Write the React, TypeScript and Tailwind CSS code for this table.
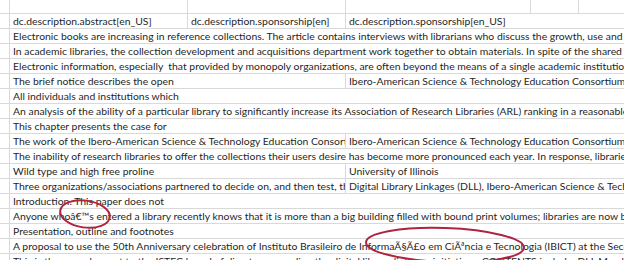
// px widths of columns A..F, used to size cells and merged overflow segments
const widths = [10, 178, 158, 185, 48, 160];

type Row = (string | null)[];

const rows: Row[] = [
  [null, null, null, null, null, null],
  [null, "dc.description.abstract[en_US]", "dc.description.sponsorship[en]", "dc.description.sponsorship[en_US]", null, null],
  [null, "Electronic books are increasing in reference collections. The article contains interviews with librarians who discuss the growth, use and future of e-books in their libraries.", null, null, null, null],
  [null, "In academic libraries, the collection development and acquisitions department work together to obtain materials. In spite of the shared goals of both departments", null, null, null, null],
  [null, "Electronic information, especially  that provided by monopoly organizations, are often beyond the means of a single academic institution to acquire", null, null, null, null],
  [null, "The brief notice describes the open", null, "Ibero-American Science & Technology Education Consortium", null, null],
  [null, "All individuals and institutions which", null, null, null, null],
  [null, "An analysis of the ability of a particular library to significantly increase its Association of Research Libraries (ARL) ranking in a reasonable amount of time", null, null, null, null],
  [null, "This chapter presents the case for", null, null, null, null],
  [null, "The work of the Ibero-American Science & Technology Education Consortium (ISTEC)", null, "Ibero-American Science & Technology Education Consortium", null, null],
  [null, "The inability of research libraries to offer the collections their users desire has become more pronounced each year. In response, libraries have", null, null, null, null],
  [null, "Wild type and high free proline", null, "University of Illinois", null, null],
  [null, "Three organizations/associations partnered to decide on, and then test, the", null, "Digital Library Linkages (DLL), Ibero-American Science & Technology Education Consortium", null, null],
  [null, "Introduction. This paper does not", null, null, null, null],
  [null, "Anyone whoâ€™s entered a library recently knows that it is more than a big building filled with bound print volumes; libraries are now becoming", null, null, null, null],
  [null, "Presentation, outline and footnotes", null, null, null, null],
  [null, "A proposal to use the 50th Anniversary celebration of Instituto Brasileiro de InformaÃ§Ã£o em CiÃªncia e Tecnologia (IBICT) at the Second", null, null, null, null],
  [null, "This is the annual report to the ISTEC board of directors regarding the digital library linkages initiatives. CONTENTS include: DLL March 2000", null, null, null, null],
];

// text spills into empty cells to its right, like Excel does
function segments(row: Row) {
  const out: { text: string | null; w: number }[] = [];
  let i = 0;
  while (i < row.length) {
    const text = row[i];
    let w = widths[i];
    let j = i + 1;
    if (text) {
      while (j < row.length && !row[j]) {
        w += widths[j];
        j++;
      }
    }
    out.push({ text, w });
    i = j;
  }
  return out;
}

const SheetRow = ({ row, first }: { row: Row; first: boolean }) => (
  <div className={`flex border-b border-[#d9d9d9] ${first ? "h-[14px]" : "h-[15px]"}`}>
    {segments(row).map((seg, i) => (
      <div
        key={i}
        style={{ width: seg.w }}
        className="shrink-0 border-r border-[#d9d9d9] overflow-hidden whitespace-pre pl-[3px] leading-[14px]"
      >
        {seg.text}
      </div>
    ))}
  </div>
);

export default function App() {
  return (
    <div className="relative w-[624px] h-[260px] overflow-hidden bg-white text-[10.4px] text-[#1f1f1f] font-['Lato',sans-serif]">
      <div className="w-[800px]">
        {rows.map((row, i) => (
          <SheetRow key={i} row={row} first={i === 0} />
        ))}
      </div>

      {/* hand-drawn red circles over the garbled characters */}
      <svg className="absolute inset-0 pointer-events-none" width="624" height="260">
        <ellipse cx="85" cy="214" rx="25" ry="13.5" transform="rotate(8 85 214)" fill="none" stroke="#b0233f" strokeWidth="2" />
        <ellipse cx="445" cy="245" rx="79" ry="17" transform="rotate(2 445 245)" fill="none" stroke="#b0233f" strokeWidth="2" />
      </svg>
    </div>
  );
}
